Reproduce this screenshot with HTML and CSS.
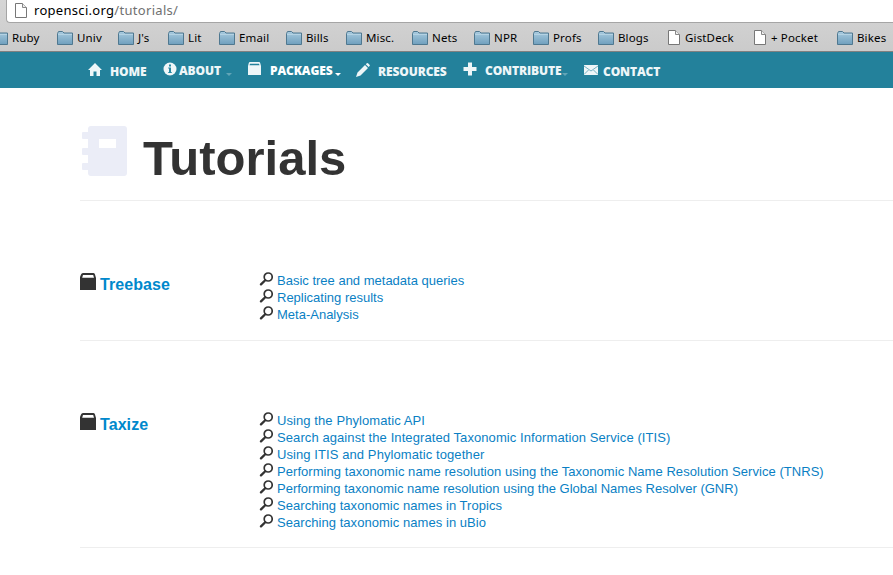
FILE: index.html
```html
<!DOCTYPE html>
<html lang="en">
<head>
<meta charset="utf-8">
<title>Tutorials</title>
<link rel="stylesheet" href="styles.css">
</head>
<body>
<svg class="defs" width="0" height="0" aria-hidden="true">
  <linearGradient id="blue" x1="0" y1="0" x2="0" y2="1"><stop offset="0" stop-color="#a9cbdf"/><stop offset="1" stop-color="#6f9fbd"/></linearGradient>
  <symbol id="folder" viewBox="0 0 16 14"><path d="M.5 13.5v-11l1-2h4l1.500 1.500h8.500v11.500z" fill="url(#blue)" stroke="#4f7890"/><path d="M1 3.500h14" stroke="#b4d2e3"/></symbol>
  <symbol id="doc" viewBox="0 0 12 15"><path d="M.5.5h7l4 4v10h-11z" fill="#fff" stroke="#777"/><path d="M7.500.5v4h4" fill="#eee" stroke="#888"/></symbol>
  <symbol id="book" viewBox="0 0 16 17"><path d="M3 0h10.500q1.300 0 1.500 1.500L16 5v12H0V4L1 1.500Q1.500 0 3 0z" fill="currentColor"/><path class="page" d="M3 2h10.200l.8 2.800H2.200z"/></symbol>
  <symbol id="search" viewBox="0 0 14 14"><circle cx="9.200" cy="5" r="4" fill="none" stroke="#333" stroke-width="1.700"/><path d="M6.200 8.200L2 12.400" stroke="#333" stroke-width="2.300" stroke-linecap="round"/></symbol>
</svg>
<header class="browser">
  <div class="address"><svg class="doc"><use href="#doc"/></svg><span class="url">ropensci.org<i>/tutorials/</i></span></div>
  <div class="bookmarks">
    <span><svg class="folder"><use href="#folder"/></svg>Ruby</span>
    <span><svg class="folder"><use href="#folder"/></svg>Univ</span>
    <span><svg class="folder"><use href="#folder"/></svg>J's</span>
    <span><svg class="folder"><use href="#folder"/></svg>Lit</span>
    <span><svg class="folder"><use href="#folder"/></svg>Email</span>
    <span><svg class="folder"><use href="#folder"/></svg>Bills</span>
    <span><svg class="folder"><use href="#folder"/></svg>Misc.</span>
    <span><svg class="folder"><use href="#folder"/></svg>Nets</span>
    <span><svg class="folder"><use href="#folder"/></svg>NPR</span>
    <span><svg class="folder"><use href="#folder"/></svg>Profs</span>
    <span><svg class="folder"><use href="#folder"/></svg>Blogs</span>
    <span><svg class="doc"><use href="#doc"/></svg>GistDeck</span>
    <span><svg class="doc"><use href="#doc"/></svg>+ Pocket</span>
    <span><svg class="folder"><use href="#folder"/></svg>Bikes</span>
  </div>
</header>
<nav class="nav">
  <a class="low home"><svg width="14" height="13" viewBox="0 0 14 13"><path d="M7 0l7 7h-2v6H8.500V8.500h-3V13H2V7H0z" fill="currentColor"/></svg><b>HOME</b></a>
  <a class="about"><svg width="14" height="14" viewBox="0 0 14 14"><circle cx="7" cy="7" r="6.500" fill="currentColor"/><path d="M6 2.500h2v2H6zM5.200 5.500H8v4.700h1V11H5v-.8h1V6.500h-.8z" fill="#2688a3"/></svg><b>ABOUT</b><i class="caret dim"></i></a>
  <a class="packages"><svg width="13" height="13" viewBox="0 0 13 13"><path d="M2 0h9q1 0 1.200 1L13 4v9H0V4l.8-3Q1 0 2 0z" fill="currentColor"/><path d="M2 1.700h9l.5 1.600h-10z" fill="#23819b"/></svg><b>PACKAGES</b><i class="caret"></i></a>
  <a class="low resources"><svg width="14" height="14" viewBox="0 0 14 14"><path d="M0 14l1.500-4.500L9 2l3 3-7.500 7.500zM9.800 1.200l1-1q.8-.4 1.500.3l1.200 1.200q.7.7.1 1.400l-1 1z" fill="currentColor"/></svg><b>RESOURCES</b></a>
  <a class="contribute"><svg width="14" height="14" viewBox="0 0 14 14"><path d="M5 .5h4V5h4.500v4H9v4.500H5V9H.5V5H5z" fill="currentColor"/></svg><b>CONTRIBUTE</b><i class="caret dim"></i></a>
  <a class="low contact"><svg width="14" height="10" viewBox="0 0 14 10"><path d="M0 0h14v10H0z" fill="currentColor"/><path d="M0 1l7 5 7-5M0 9.500L4.500 5M14 9.500L9.500 5" fill="none" stroke="#68a9bc" stroke-width=".9"/></svg><b>CONTACT</b></a>
</nav>
<main>
  <div class="title">
    <svg width="46" height="50" viewBox="0 0 46 50"><path fill="#ebedf7" fill-rule="evenodd" d="M9 0h33q3 0 3 3v44q0 3-3 3H9q-3 0-3-3v-3H1q-1 0-1-1v-5q0-1 1-1h5v-8H1q-1 0-1-1v-5q0-1 1-1h5v-9H1q-1 0-1-1V7q0-1 1-1h5V3q0-3 3-3zM17 13v9h17v-9z"/></svg>
    <h1>Tutorials</h1>
  </div>
  <section class="row first">
    <h2><svg class="book"><use href="#book"/></svg><a>Treebase</a></h2>
    <ul>
      <li><svg class="search"><use href="#search"/></svg><a>Basic tree and metadata queries</a></li>
      <li><svg class="search"><use href="#search"/></svg><a>Replicating results</a></li>
      <li><svg class="search"><use href="#search"/></svg><a>Meta-Analysis</a></li>
    </ul>
  </section>
  <section class="row">
    <h2><svg class="book"><use href="#book"/></svg><a>Taxize</a></h2>
    <ul>
      <li><svg class="search"><use href="#search"/></svg><a class="wide">Using the Phylomatic API</a></li>
      <li><svg class="search"><use href="#search"/></svg><a class="wide">Search against the Integrated Taxonomic Information Service (ITIS)</a></li>
      <li><svg class="search"><use href="#search"/></svg><a class="wide">Using ITIS and Phylomatic together</a></li>
      <li><svg class="search"><use href="#search"/></svg><a class="mid">Performing taxonomic name resolution using the Taxonomic Name Resolution Service (TNRS)</a></li>
      <li><svg class="search"><use href="#search"/></svg><a>Performing taxonomic name resolution using the Global Names Resolver (GNR)</a></li>
      <li><svg class="search"><use href="#search"/></svg><a class="mid">Searching taxonomic names in Tropics</a></li>
      <li><svg class="search"><use href="#search"/></svg><a class="mid">Searching taxonomic names in uBio</a></li>
    </ul>
  </section>
</main>
</body>
</html>
```
FILE: styles.css
```css
* { box-sizing: border-box; }
body { margin: 0; height: 575px; overflow: hidden; background: #fff; color: #333; font-family: "Liberation Sans", Arial, sans-serif; }
.defs { display: block; height: 0; }
svg { flex: none; }
.browser { height: 52px; background: linear-gradient(#d6d6d6, #cbcbcb); border-bottom: 1px solid #808080; color: #000; font-family: "Noto Sans", sans-serif; overflow: hidden; }
.address { height: 23px; margin-left: 6px; padding: 0 0 2px 8px; display: flex; align-items: center; background: #fff; border: solid #a5a5a5; border-width: 0 0 1px 1px; border-radius: 0 0 0 4px; }
.url { margin-left: 7px; font-size: 13px; letter-spacing: .3px; line-height: 20px; }
.url i { font-style: normal; color: #707070; }
.doc { width: 12px; height: 15px; }
.folder { width: 16px; height: 14px; }
.bookmarks { margin-left: -8px; height: 29px; display: grid; grid-template-columns: 65px 61px 50px 51px 67px 60px 66px 62px 59px 65px 70px 86px 83px 70px; font-size: 11.5px; letter-spacing: .15px; white-space: nowrap; }
.bookmarks span { display: flex; align-items: center; gap: 4px; }
.bookmarks .doc { margin-right: 1px; }
.nav { height: 36px; padding-left: 88px; background: #23819b; color: #eef6f8; display: grid; grid-template-columns: 75px 85px 108px 107px 121px 90px; font: 700 12px/16px "Open Sans", sans-serif; letter-spacing: -.12px; }
.nav a { display: flex; align-items: flex-start; padding-top: 11px; }
.nav svg { display: block; }
.low b { margin-top: 1px; }
.home b, .resources b { margin-left: 8px; }
.about b { margin-left: 2px; }
.about svg { margin-top: -1px; }
.packages b { margin-left: 9px; color: #fff; }
.packages svg { margin-top: -1px; }
.contribute b { margin-left: 8px; }
.contribute svg { margin-top: -1px; }
.contact b { margin-left: 5px; }
.contact svg { margin-top: 2px; }
.caret { margin: 10px 0 0 3px; border: solid transparent; border-width: 3px 3px 0; border-top-color: #fff; }
.contribute .caret { margin-left: 1px; }
.about .caret { margin-left: 5px; }
.nav .dim { border-top-color: #62a5b7; }
main { padding-left: 80px; }
.title { height: 113px; border-bottom: 1px solid #eee; display: flex; align-items: flex-start; padding: 38px 0 0 2px; }
h1 { margin: 4px 0 0 15px; font-size: 49px; line-height: 56px; }
.row { height: 207px; display: flex; border-bottom: 1px solid #eee; padding-top: 71px; }
.row.first { height: 140px; }
h2 { margin: 0; padding-top: 2px; width: 179px; display: flex; font-size: 16px; line-height: 22px; letter-spacing: .08px; }
.book { width: 16px; height: 17px; margin: -1px 4px 0 0; }
.page { fill: #fff; }
a { color: #08c; }
.nav a { color: inherit; }
ul { margin: 0; padding: 0; list-style: none; font-size: 13px; }
li { height: 17px; line-height: 17px; display: flex; white-space: nowrap; }
li a { color: #0a7fc4; }
.wide { letter-spacing: .085px; }
.mid { letter-spacing: .05px; }
.search { width: 14px; height: 14px; margin-right: 4px; }
```
